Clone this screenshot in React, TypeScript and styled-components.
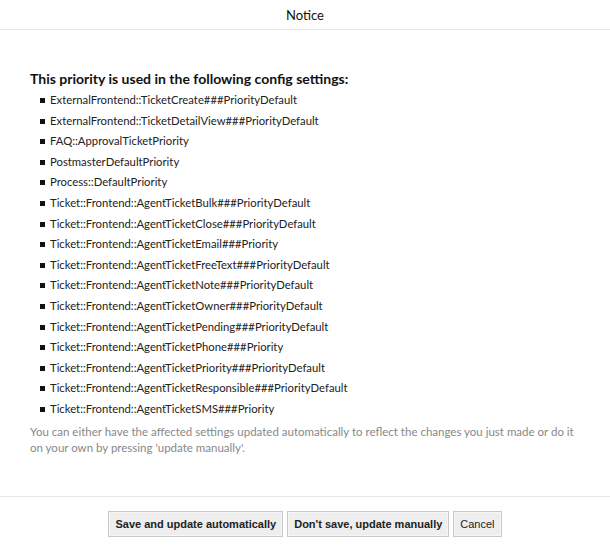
import React from "react";
import styled, { createGlobalStyle } from "styled-components";

const Global = createGlobalStyle`
  html, body { margin: 0; padding: 0; background: #fff; }
  body { font-family: Lato, "Noto Sans", sans-serif; }
`;

const Dialog = styled.div`
  width: 610px;
  height: 551px;
  display: flex;
  flex-direction: column;
  background: #fff;
`;

const Header = styled.div`
  height: 30px;
  border-bottom: 1px solid #e8e8e8;
  display: flex;
  align-items: center;
  justify-content: center;
  font-size: 13px;
  color: #111;
  box-sizing: border-box;
  padding-top: 1px;
`;

const Body = styled.div`
  flex: 1;
  padding: 40px 30px 0 30px;
`;

const Heading = styled.h2`
  margin: 0 0 2px 0;
  font-size: 14px;
  font-weight: 700;
  color: #111;
  line-height: 18px;
`;

const List = styled.ul`
  margin: 0;
  padding: 0 0 0 20px;
  list-style: none;
`;

const Item = styled.li`
  position: relative;
  font-size: 11.3px;
  line-height: 20.6px;
  color: #222;
  &::before {
    content: "";
    position: absolute;
    left: -10px;
    top: 8px;
    width: 5px;
    height: 5px;
    background: #111;
  }
`;

const Note = styled.p`
  margin: 4px 0 0 0;
  font-size: 11.5px;
  line-height: 16px;
  color: #888;
`;

const Footer = styled.div`
  height: 55px;
  border-top: 1px solid #e8e8e8;
  display: flex;
  justify-content: center;
  align-items: flex-start;
  gap: 4px;
  padding-top: 14px;
  box-sizing: border-box;
`;

const Button = styled.button<{ $primary?: boolean }>`
  height: 26px;
  padding: 0 6px;
  background: #eee;
  border: 1px solid #c8c8c8;
  box-shadow: inset 0 0 0 1px #f6f6f6;
  font-family: "Liberation Sans", Arial, sans-serif;
  font-size: 11px;
  font-weight: ${(p) => (p.$primary ? 700 : 400)};
  color: #222;
  cursor: pointer;
`;

const items = [
  "ExternalFrontend::TicketCreate###PriorityDefault",
  "ExternalFrontend::TicketDetailView###PriorityDefault",
  "FAQ::ApprovalTicketPriority",
  "PostmasterDefaultPriority",
  "Process::DefaultPriority",
  "Ticket::Frontend::AgentTicketBulk###PriorityDefault",
  "Ticket::Frontend::AgentTicketClose###PriorityDefault",
  "Ticket::Frontend::AgentTicketEmail###Priority",
  "Ticket::Frontend::AgentTicketFreeText###PriorityDefault",
  "Ticket::Frontend::AgentTicketNote###PriorityDefault",
  "Ticket::Frontend::AgentTicketOwner###PriorityDefault",
  "Ticket::Frontend::AgentTicketPending###PriorityDefault",
  "Ticket::Frontend::AgentTicketPhone###Priority",
  "Ticket::Frontend::AgentTicketPriority###PriorityDefault",
  "Ticket::Frontend::AgentTicketResponsible###PriorityDefault",
  "Ticket::Frontend::AgentTicketSMS###Priority",
];

export default function App() {
  return (
    <>
      <Global />
      <Dialog>
        <Header>Notice</Header>
        <Body>
          <Heading>This priority is used in the following config settings:</Heading>
          <List>
            {items.map((i) => (
              <Item key={i}>{i}</Item>
            ))}
          </List>
          <Note>
            You can either have the affected settings updated automatically to reflect the changes you just made or do it
            on your own by pressing 'update manually'.
          </Note>
        </Body>
        <Footer>
          <Button $primary>Save and update automatically</Button>
          <Button $primary>Don't save, update manually</Button>
          <Button>Cancel</Button>
        </Footer>
      </Dialog>
    </>
  );
}
